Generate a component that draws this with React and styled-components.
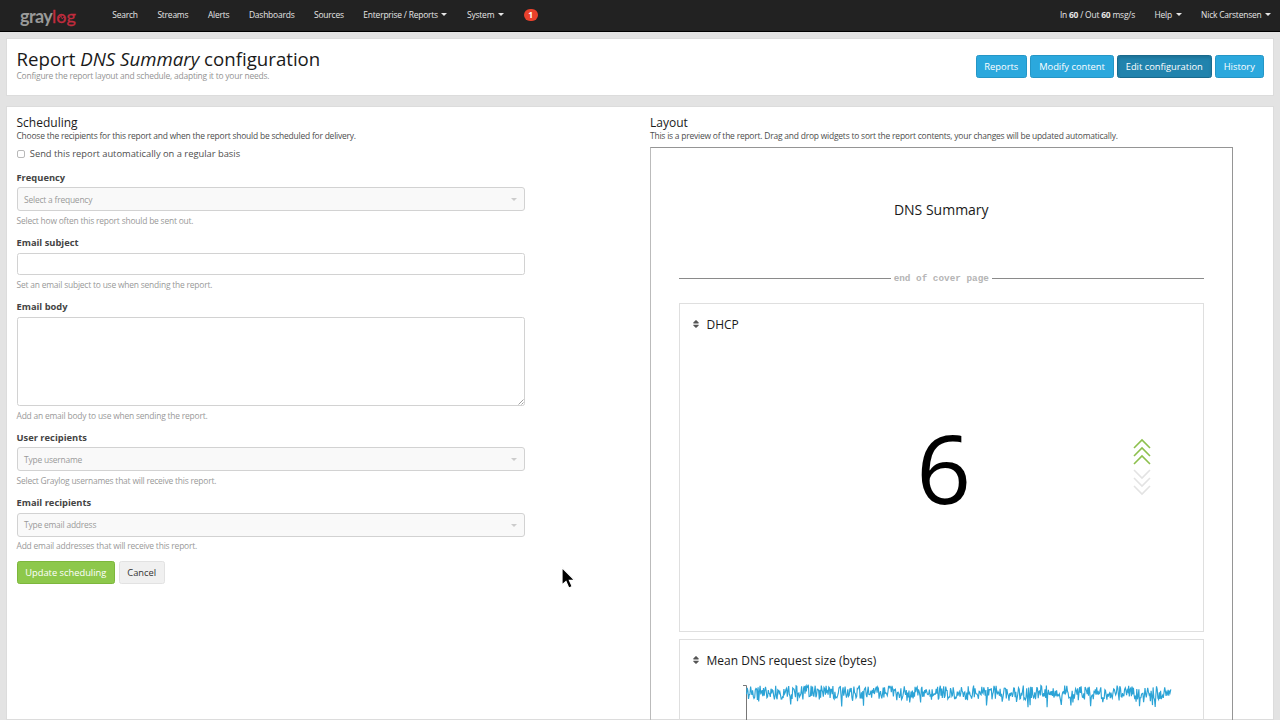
import styled, { createGlobalStyle, css } from "styled-components";
import { FaSort } from "react-icons/fa";

const GlobalStyle = createGlobalStyle`
  * {
    box-sizing: border-box;
  }

  body {
    margin: 0;
    background: #e3e3e3;
    color: #4d4d4d;
    font-family: "Open Sans", "Noto Sans", sans-serif;
    font-size: 9.33px;
    line-height: 13.33px;
  }
`;

// slightly condensed small print
const smallText = css`
  font-size: 8.45px;
  letter-spacing: -0.205px;
`;

const Page = styled.div`
  height: 720px;
  display: flex;
  flex-direction: column;
  overflow: hidden;
  position: relative;
`;

// ---------- navbar ----------

const Navbar = styled.nav`
  flex: none;
  height: 32px;
  display: flex;
  align-items: center;
  padding: 0 9px 2px 20px;
  background: #222;
  border-bottom: 1px solid #000;
  color: #e6e6e6;
  ${smallText}
`;

const Logo = styled.div`
  position: relative;
  width: 82.5px;
  font-family: Lato, sans-serif;
  font-size: 18px;
  line-height: 20px;
  letter-spacing: -0.6px;
  color: #999;
  font-weight: 700;
  padding-top: 2px;
`;

const LogoRed = styled.span`
  color: #c02c3e;
  font-weight: 400;
  letter-spacing: 0;
  -webkit-text-stroke: 0.3px #c02c3e;
`;

const Pulse = styled.svg`
  position: absolute;
  left: 35px;
  top: 9px;
`;

const NavItem = styled.a`
  display: flex;
  align-items: center;
  padding: 0 ${(props) => (props.$last ? "0" : "9.8px")} 0 9.8px;
  white-space: pre;
`;

const NavRight = styled.div`
  display: flex;
  margin-left: auto;
`;

const Caret = styled.span`
  margin-left: ${(props) => (props.$muted ? "0" : "3.5px")};
  margin-top: 1px;
  border: 3px solid transparent;
  border-top-color: ${(props) => (props.$muted ? "#ccc" : "currentColor")};
  border-bottom: 0;
`;

const Badge = styled.span`
  display: flex;
  align-items: center;
  justify-content: center;
  width: 14px;
  height: 12.5px;
  margin: 1px 0 0 10px;
  border-radius: 7px;
  background: #e8412c;
  color: #fff;
  font-weight: 700;
`;

// ---------- page header ----------

const Panel = styled.section`
  background: #fff;
  border: 1px solid #dcdcdc;
  margin: 0 6px;
  padding: 0 9.5px;
  display: flex;
`;

const HeaderPanel = styled(Panel)`
  flex: none;
  height: 58px;
  margin-top: 6px;
  justify-content: space-between;
`;

const ContentPanel = styled(Panel)`
  flex: 1;
  margin-top: 10px;
  padding-top: 8px;
  min-height: 0;
  align-items: flex-start;
`;

const Title = styled.h1`
  margin: 9px 0 0;
  font-size: 18.67px;
  line-height: 21px;
  font-weight: 400;
  color: #1a1a1a;
`;

const Lead = styled.p`
  margin: 0;
  line-height: 14px;
  color: #939393;
  ${smallText}
`;

const ButtonGroup = styled.div`
  display: flex;
  gap: 3.5px;
`;

const HeaderButtons = styled(ButtonGroup)`
  margin-top: 16px;
`;

const variants = {
  info: "background: #2ba8dd; border-color: #2596c6; color: #fff;",
  active:
    "background: #2183ad; border-color: #196a8d; color: #fff; box-shadow: inset 0 2px 3px rgba(0, 0, 0, 0.13);",
  success: "background: #8dc84b; border-color: #7db73c; color: #fff;",
  default: "background: #f0f0f0; border-color: #e2e2e2; color: #333;",
};

const Button = styled.button`
  height: 23px;
  padding: 0 7.7px;
  border: 1px solid;
  border-radius: 2.5px;
  font: inherit;
  white-space: nowrap;
  ${(props) => variants[props.$variant || "default"]}
`;

// ---------- form ----------

const FormColumn = styled.form`
  width: 508px;
  margin-right: 125.5px;
`;

const Heading = styled.h2`
  margin: 0;
  font-size: 12px;
  line-height: 15px;
  font-weight: 400;
  color: #1a1a1a;
`;

const Description = styled.p`
  margin: 0;
  line-height: 11.4px;
  ${smallText}
`;

const CheckboxRow = styled.label`
  display: flex;
  align-items: center;
  gap: 5.3px;
  margin: 6px 0 9.9px;
`;

const Checkbox = styled.input`
  appearance: none;
  width: 8px;
  height: 8px;
  margin: 0;
  border: 1px solid #b9b9b9;
  border-radius: 2px;
  background: #fff;
`;

const FormGroup = styled.div`
  margin-bottom: 9.6px;
`;

const Label = styled.label`
  display: block;
  margin-bottom: 3.33px;
  font-weight: 700;
  color: #444;
`;

const Help = styled.span`
  display: block;
  margin-top: 3.7px;
  line-height: 11.4px;
  color: #999;
  ${smallText}
`;

const Select = styled.div`
  display: flex;
  align-items: center;
  justify-content: space-between;
  height: 24px;
  padding: 0 7px 0 6.5px;
  border: 1px solid #d2d2d2;
  border-radius: 3px;
  background: #f9f9f9;
  color: #999;
  ${smallText}
`;

const Input = styled.input`
  display: block;
  width: 100%;
  height: 22.8px;
  border: 1px solid #d2d2d2;
  border-radius: 2.5px;
  background: #fff;
`;

const TextArea = styled.textarea`
  display: block;
  width: 100%;
  height: 89.3px;
  border: 1px solid #d2d2d2;
  border-radius: 2.5px;
  background: #fff;
  resize: none;
`;

const TextAreaWrap = styled.div`
  position: relative;
`;

const Grip = styled.svg`
  position: absolute;
  right: 1px;
  bottom: 1px;
`;

// ---------- report preview ----------

const PreviewColumn = styled.div`
  width: 583px;
`;

const Preview = styled.div`
  height: 620px;
  margin-top: 6px;
  padding: 0 28px 0 27.5px;
  border: 1px solid #959595;
  border-left-color: #bbb;
`;

const ReportTitle = styled.h3`
  margin: 0;
  padding: 53px 0 57px;
  font-size: 14px;
  line-height: 18px;
  font-weight: 400;
  text-align: center;
  color: #1a1a1a;
`;

const CoverEnd = styled.div`
  display: flex;
  align-items: center;
  gap: 3px;
  height: 4px;
  font-family: "Liberation Mono", monospace;
  font-weight: 700;
  color: #b5b5b5;

  &::before,
  &::after {
    content: "";
    flex: 1;
    height: 1px;
    background: #8a8a8a;
  }
`;

const Widget = styled.article`
  display: flex;
  flex-direction: column;
  height: 329px;
  margin-top: ${(props) => (props.$first ? "22.5px" : "7px")};
  border: 1px solid #dfdfdf;
`;

const WidgetTitle = styled.h4`
  display: flex;
  align-items: center;
  gap: 6px;
  margin: 0;
  padding: 13px 11px 0;
  font-size: 12px;
  line-height: 16px;
  font-weight: 400;
  color: #1a1a1a;

  svg {
    color: #555;
    margin-top: -1px;
  }
`;

const Count = styled.div`
  flex: 1;
  display: grid;
  grid-template-columns: 1fr auto 1fr;
  align-items: center;
  padding: 0 52px 30px 57px;
  font-size: 96px;
  line-height: 100px;
  color: #000;
`;

const CountNumber = styled.span`
  grid-column: 2;
`;

const Trend = styled.svg`
  justify-self: end;
`;

const Chart = styled.svg`
  display: block;
  margin: 15px 0 0 62.5px;
`;

const Cursor = styled.svg`
  position: absolute;
  left: 558px;
  top: 564px;
`;

const navLinks = [
  { text: "Search" },
  { text: "Streams" },
  { text: "Alerts" },
  { text: "Dashboards" },
  { text: "Sources" },
  { text: "Enterprise / Reports", caret: true },
  { text: "System", caret: true },
];

// steady noise with occasional dips
const buildSeries = () => {
  let seed = 20;
  const random = () => {
    seed = (seed * 16807) % 2147483647;
    return seed / 2147483647;
  };
  const points = [];
  for (let x = 4.5; x <= 429.5; x += 0.68) {
    const dip = random() > 0.82 ? random() * 9 : 0;
    const y = 1.5 + random() * 14 + dip;
    points.push(`${x.toFixed(1)},${y.toFixed(1)}`);
  }
  return points.join(" ");
};

const SelectField = ({ label, placeholder, help }) => (
  <FormGroup>
    <Label>{label}</Label>
    <Select>
      {placeholder}
      <Caret $muted />
    </Select>
    <Help>{help}</Help>
  </FormGroup>
);

const App = () => {
  return (
    <Page>
      <GlobalStyle />
      <Navbar>
        <Logo>
          gray<LogoRed>log</LogoRed>
          <Pulse width="12" height="8" fill="none" stroke="#c02c3e">
            <path d="M3 4.5h2l1-2 1.2 3.5 1-1.5h2" strokeWidth="0.8" />
          </Pulse>
        </Logo>
        {navLinks.map((link) => (
          <NavItem key={link.text}>
            {link.text}
            {link.caret && <Caret />}
          </NavItem>
        ))}
        <Badge>1</Badge>
        <NavRight>
          <NavItem>
            In <b>60</b> / Out <b>60</b> msg/s
          </NavItem>
          <NavItem>
            Help
            <Caret />
          </NavItem>
          <NavItem $last>
            Nick Carstensen
            <Caret />
          </NavItem>
        </NavRight>
      </Navbar>

      <HeaderPanel>
        <div>
          <Title>
            Report <em>DNS Summary</em> configuration
          </Title>
          <Lead>
            Configure the report layout and schedule, adapting it to your needs.
          </Lead>
        </div>
        <HeaderButtons>
          <Button $variant="info">Reports</Button>
          <Button $variant="info">Modify content</Button>
          <Button $variant="active">Edit configuration</Button>
          <Button $variant="info">History</Button>
        </HeaderButtons>
      </HeaderPanel>

      <ContentPanel>
        <FormColumn>
          <Heading>Scheduling</Heading>
          <Description>
            Choose the recipients for this report and when the report should be
            scheduled for delivery.
          </Description>
          <CheckboxRow>
            <Checkbox type="checkbox" />
            Send this report automatically on a regular basis
          </CheckboxRow>
          <SelectField
            label="Frequency"
            placeholder="Select a frequency"
            help="Select how often this report should be sent out."
          />
          <FormGroup>
            <Label>Email subject</Label>
            <Input type="text" />
            <Help>Set an email subject to use when sending the report.</Help>
          </FormGroup>
          <FormGroup>
            <Label>Email body</Label>
            <TextAreaWrap>
              <TextArea />
              <Grip width="6" height="6" stroke="#888" strokeWidth="0.8">
                <path d="M0.5 5.5l5-5M3.5 5.5l2-2" />
              </Grip>
            </TextAreaWrap>
            <Help>Add an email body to use when sending the report.</Help>
          </FormGroup>
          <SelectField
            label="User recipients"
            placeholder="Type username"
            help="Select Graylog usernames that will receive this report."
          />
          <SelectField
            label="Email recipients"
            placeholder="Type email address"
            help="Add email addresses that will receive this report."
          />
          <ButtonGroup>
            <Button type="button" $variant="success">
              Update scheduling
            </Button>
            <Button type="button">Cancel</Button>
          </ButtonGroup>
        </FormColumn>

        <PreviewColumn>
          <Heading>Layout</Heading>
          <Description>
            This is a preview of the report. Drag and drop widgets to sort the
            report contents, your changes will be updated automatically.
          </Description>
          <Preview>
            <ReportTitle>DNS Summary</ReportTitle>
            <CoverEnd>end of cover page</CoverEnd>
            <Widget $first>
              <WidgetTitle>
                <FaSort size={10} />
                DHCP
              </WidgetTitle>
              <Count>
                <CountNumber>6</CountNumber>
                <Trend width="18" height="58" fill="none" strokeWidth="1.6">
                  <path
                    d="M1 10l8-8 8 8M1 18l8-8 8 8M1 26l8-8 8 8"
                    stroke="#8dc04d"
                  />
                  <path
                    d="M1 32l8 8 8-8M1 40l8 8 8-8M1 48l8 8 8-8"
                    stroke="#e3e3e3"
                  />
                </Trend>
              </Count>
            </Widget>
            <Widget>
              <WidgetTitle>
                <FaSort size={10} />
                Mean DNS request size (bytes)
              </WidgetTitle>
              <Chart width="432" height="60" fill="none">
                <path d="M1 1.5h3.5V60" stroke="#777" />
                <polyline
                  points={buildSeries()}
                  stroke="#2ba3d6"
                  strokeWidth="1.15"
                />
              </Chart>
            </Widget>
          </Preview>
        </PreviewColumn>
      </ContentPanel>

      <Cursor width="22" height="30">
        <path
          d="M4 3.5v17.5l4-3.6 2.8 6.6 3.4-1.4-2.8-6.3h5.3z"
          fill="#000"
          stroke="#fff"
          strokeWidth="1.2"
        />
      </Cursor>
    </Page>
  );
};

export default App;
